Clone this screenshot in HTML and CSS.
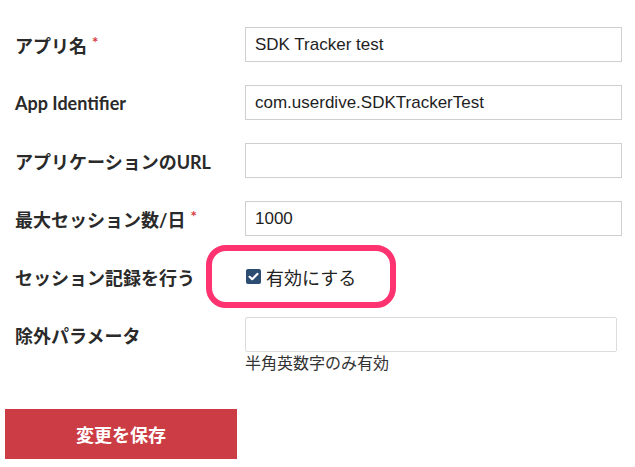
FILE: index.html
```html
<!DOCTYPE html>
<html lang="ja">
<head>
<meta charset="utf-8">
<link rel="stylesheet" href="styles.css">
</head>
<body>
<form class="form">
  <div class="row">
    <label class="label">アプリ名<span class="req">*</span></label>
    <div class="field"><div class="input">SDK Tracker test</div></div>
  </div>
  <div class="row">
    <label class="label">App Identifier</label>
    <div class="field"><div class="input">com.userdive.SDKTrackerTest</div></div>
  </div>
  <div class="row">
    <label class="label">アプリケーションのURL</label>
    <div class="field"><div class="input"></div></div>
  </div>
  <div class="row">
    <label class="label">最大セッション数/日<span class="req">*</span></label>
    <div class="field"><div class="input">1000</div></div>
  </div>
  <div class="row">
    <label class="label">セッション記録を行う</label>
    <div class="field">
      <span class="check">
        <span class="box"><svg width="15" height="15" viewBox="0 0 15 15"><path d="M3.6 7.8 L6.2 10.2 L11.4 4.9" fill="none" stroke="#fff" stroke-width="2.2" stroke-linecap="round" stroke-linejoin="round"/></svg></span>
        <span class="check-text">有効にする</span>
      </span>
    </div>
  </div>
  <div class="row row-last">
    <label class="label">除外パラメータ</label>
    <div class="field">
      <div class="input input-short"></div>
      <div class="hint">半角英数字のみ有効</div>
    </div>
  </div>
  <button type="button" class="save">変更を保存</button>
</form>
</body>
</html>
```
FILE: styles.css
```css
html, body {
  margin: 0;
  padding: 0;
  background: #fff;
}
.form {
  padding: 27px 13px 0 5px;
  font-family: Lato, "Noto Sans CJK JP", sans-serif;
}
.row {
  display: grid;
  grid-template-columns: 240px 1fr;
  align-items: start;
  margin-bottom: 23px;
}
.label {
  height: 35px;
  display: flex;
  align-items: center;
  padding-left: 10px;
  font-size: 18px;
  font-weight: 700;
  color: #2a2a2a;
  white-space: nowrap;
}
.req {
  color: #d9383f;
  font-size: 15px;
  margin-left: 5px;
  position: relative;
  top: -3px;
}
.input {
  box-sizing: border-box;
  height: 35px;
  border: 1px solid #cfcfcf;
  padding: 0 9px;
  display: flex;
  align-items: center;
  font-family: "Liberation Sans", Arial, sans-serif;
  font-size: 17px;
  color: #1e1e1e;
}
.input-short {
  width: 372px;
  border-color: #dcdcdc;
  border-radius: 2px;
}
.check {
  position: relative;
  height: 35px;
  display: inline-flex;
  align-items: center;
  gap: 5px;
  padding-left: 1px;
}
.check::before {
  content: "";
  position: absolute;
  left: -39px;
  right: -40px;
  top: -14px;
  bottom: -14px;
  border: 6px solid #fe3370;
  border-radius: 20px;
}
.box {
  width: 15px;
  height: 15px;
  border-radius: 2px;
  background: #2c4c71;
  display: inline-flex;
}
.check-text {
  font-family: "Noto Sans CJK JP", sans-serif;
  font-size: 18px;
  color: #222;
}
.hint {
  font-family: "Noto Sans CJK JP", sans-serif;
  font-size: 16px;
  color: #333;
  line-height: 20px;
  margin-top: 0;
}
.row-last {
  margin-bottom: 37px;
}
.save {
  display: flex;
  align-items: center;
  justify-content: center;
  width: 232px;
  height: 50px;
  border: none;
  margin: 0;
  padding: 0;
  background: #cc3c44;
  color: #fff;
  font-family: "Noto Sans CJK JP", sans-serif;
  font-size: 18px;
  font-weight: 700;
}
```
